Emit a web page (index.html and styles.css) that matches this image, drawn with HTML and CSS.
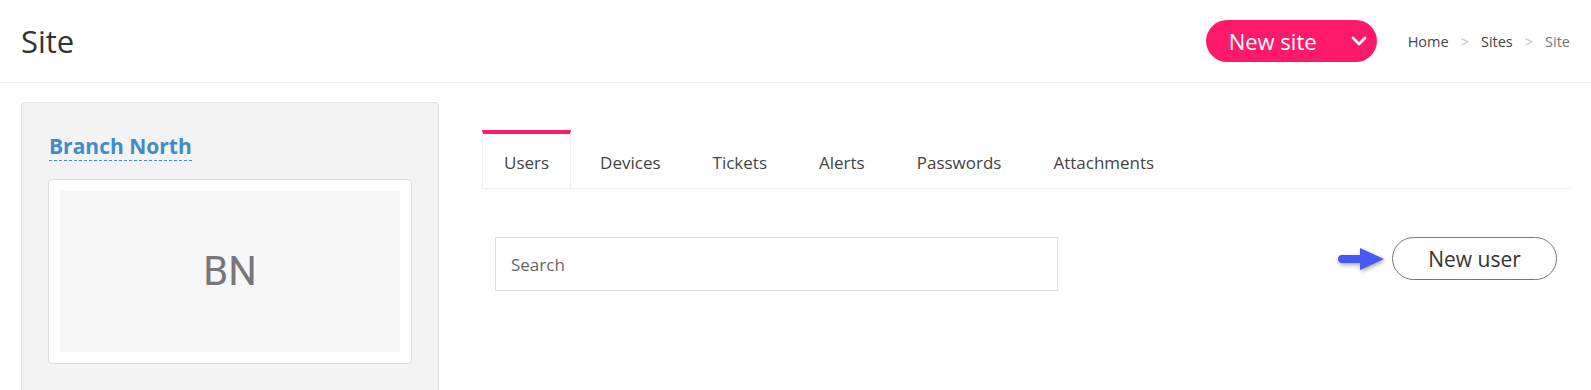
FILE: index.html
```html
<!DOCTYPE html>
<html lang="en">
<head>
    <meta charset="UTF-8">
    <meta name="viewport" content="width=device-width, initial-scale=1.0">
    <title>Site</title>
    <link rel="stylesheet" href="styles.css">
</head>
<body>
    <header class="page-header">
        <h1 class="page-title">Site</h1>
        <div class="header-right">
            <button class="btn-new-site">
                <span>New site</span>
                <svg class="chevron" width="16" height="10" viewBox="0 0 16 10">
                    <path d="M2 2 L8 8 L14 2" fill="none" stroke="#fff" stroke-width="2.6" stroke-linecap="round" stroke-linejoin="round"/>
                </svg>
            </button>
            <nav class="breadcrumb">
                <a href="#">Home</a>
                <span class="sep">&gt;</span>
                <a href="#">Sites</a>
                <span class="sep">&gt;</span>
                <span class="current">Site</span>
            </nav>
        </div>
    </header>

    <main class="layout">
        <aside class="site-card">
            <a class="site-name" href="#">Branch North</a>
            <div class="logo-box">
                <div class="logo-placeholder">BN</div>
            </div>
        </aside>

        <section class="content">
            <ul class="tabs">
                <li class="tab active">Users</li>
                <li class="tab">Devices</li>
                <li class="tab">Tickets</li>
                <li class="tab">Alerts</li>
                <li class="tab">Passwords</li>
                <li class="tab">Attachments</li>
            </ul>

            <div class="toolbar">
                <input class="search" type="text" placeholder="Search">
                <div class="toolbar-right">
                    <svg class="hint-arrow" width="50" height="28" viewBox="0 0 50 28">
                        <line x1="6" y1="14" x2="28" y2="14" stroke="#4659f5" stroke-width="8" stroke-linecap="round"/>
                        <polygon points="24,3 48,14 24,25" fill="#4659f5"/>
                    </svg>
                    <button class="btn-new-user">New user</button>
                </div>
            </div>
        </section>
    </main>
</body>
</html>
```

FILE: styles.css
```css
body {
    margin: 0;
    font-family: "Open Sans", "Noto Sans", Arial, sans-serif;
    color: #333;
    background: #fff;
}

/* header */
.page-header {
    height: 82px;
    padding: 0 21px 0 21px;
    border-bottom: 1px solid #eee;
    display: flex;
    align-items: center;
    justify-content: space-between;
}

.page-title {
    margin: 0;
    font-size: 31px;
    font-weight: 400;
    color: #333;
}

.header-right {
    display: flex;
    align-items: center;
    gap: 31px;
}

.btn-new-site {
    width: 171px;
    height: 42px;
    border: none;
    border-radius: 21px;
    background: #fe1a6a;
    color: #fff;
    font-family: inherit;
    font-size: 22px;
    padding: 0 10px 0 23px;
    display: flex;
    align-items: center;
    justify-content: space-between;
    cursor: pointer;
}

.breadcrumb {
    font-size: 14.5px;
    display: flex;
    align-items: center;
}

.breadcrumb a {
    color: #444;
    text-decoration: none;
}

.breadcrumb .sep {
    color: #c4c4c4;
    padding: 0 12px;
}

.breadcrumb .current {
    color: #777;
}

/* layout */
.layout {
    display: flex;
    padding: 19px 20px 0 21px;
    gap: 43px;
}

.site-card {
    width: 364px;
    flex-shrink: 0;
    height: 258px;
    background: #f3f3f3;
    border: 1px solid #e2e2e2;
    border-bottom: none;
    border-radius: 4px 4px 0 0;
    padding: 29px 26px 0 26px;
}

.site-name {
    display: inline-block;
    font-size: 21px;
    font-weight: 700;
    color: #428bca;
    text-decoration: none;
    line-height: 28px;
    border-bottom: 1px dashed #428bca;
    margin-left: 1px;
}

.logo-box {
    margin-top: 18px;
    background: #fff;
    border: 1px solid #ddd;
    border-radius: 4px;
    padding: 11px;
}

.logo-placeholder {
    height: 161px;
    background: #f7f7f7;
    display: flex;
    align-items: center;
    justify-content: center;
    font-family: Roboto, "Liberation Sans", sans-serif;
    font-size: 40px;
    color: #777;
}

/* content */
.content {
    flex: 1;
    padding-top: 28px;
}

.tabs {
    list-style: none;
    margin: 0;
    padding: 0;
    display: flex;
    border-bottom: 1px solid #eee;
}

.tab {
    height: 54px;
    line-height: 57px;
    padding: 0 22px;
    margin-right: 6px;
    font-size: 17px;
    color: #444;
    border-top: 4px solid transparent;
    border-left: 1px solid transparent;
    border-right: 1px solid transparent;
}

.tab.active {
    border-top-color: #fe1a6a;
    border-left-color: #eee;
    border-right-color: #eee;
    padding: 0 21px;
}

.toolbar {
    display: flex;
    justify-content: space-between;
    align-items: flex-start;
    padding: 48px 14px 0 13px;
}

.search {
    width: 563px;
    height: 54px;
    box-sizing: border-box;
    border: 1px solid #ddd;
    padding: 0 15px;
    font-family: inherit;
    font-size: 17px;
    color: #333;
    outline: none;
}

.search::placeholder {
    color: #666;
}

.toolbar-right {
    display: flex;
    align-items: center;
    gap: 6px;
}

.hint-arrow {
    filter: drop-shadow(1px 2px 2px rgba(0, 0, 0, 0.35));
}

.btn-new-user {
    width: 165px;
    height: 43px;
    border: 1px solid #777;
    border-radius: 22px;
    background: #fff;
    font-family: inherit;
    font-size: 21px;
    color: #333;
    cursor: pointer;
}
```
